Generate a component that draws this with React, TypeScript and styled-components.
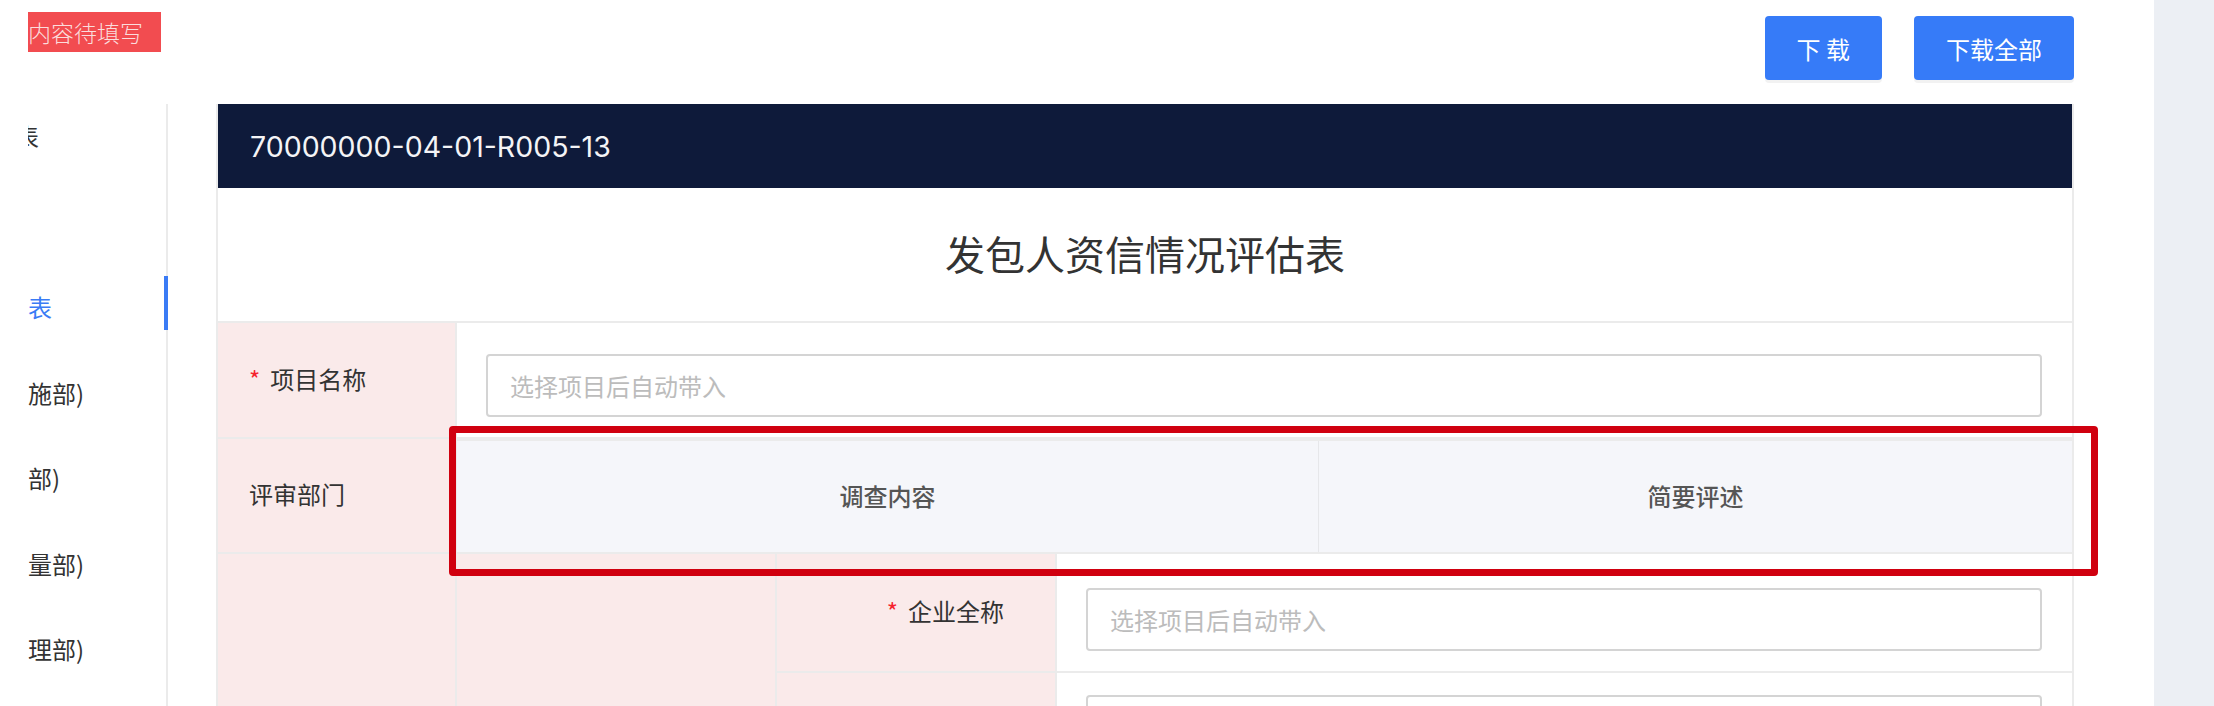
import React from 'react';
import styled, { createGlobalStyle } from 'styled-components';

const GlobalStyle = createGlobalStyle`
  html, body {
    margin: 0;
    padding: 0;
    background: #fff;
  }
  body {
    font-family: "Noto Sans CJK SC", "Noto Sans", sans-serif;
    color: #333;
  }
  * {
    box-sizing: border-box;
  }
`;

type NavItem = {
  label: string;
  active?: boolean;
  clip?: boolean;
};

const navItems: NavItem[] = [
  { label: '表', clip: true },
  { label: '' },
  { label: '表', active: true },
  { label: '施部)' },
  { label: '部)' },
  { label: '量部)' },
  { label: '理部)' },
];

const App: React.FC = () => {
  return (
    <>
      <GlobalStyle />
      <Page>
        <Main>
          <TopBar>
            <Badge>内容待填写</Badge>
            <Actions>
              <PrimaryButton>下 载</PrimaryButton>
              <PrimaryButton>下载全部</PrimaryButton>
            </Actions>
          </TopBar>

          <Body>
            <Sidebar>
              {navItems.map((item, i) => (
                <NavRow key={i} $active={item.active}>
                  <NavText $clip={item.clip}>
                    <span>{item.label}</span>
                  </NavText>
                </NavRow>
              ))}
            </Sidebar>

            <Card>
              <CardHeader>70000000-04-01-R005-13</CardHeader>
              <CardTitle>发包人资信情况评估表</CardTitle>

              <FormRow>
                <LabelCell>
                  <Star>*</Star>项目名称
                </LabelCell>
                <FieldCell $top={31}>
                  <TextInput placeholder="选择项目后自动带入" readOnly />
                </FieldCell>
              </FormRow>

              <FormRow>
                <LabelCell>评审部门</LabelCell>
                <HeadGrid>
                  <HeadCell>调查内容</HeadCell>
                  <HeadCell>简要评述</HeadCell>
                </HeadGrid>
              </FormRow>

              <Section>
                <PinkColumn />
                <PinkColumn />
                <SubRows>
                  <SubRow>
                    <SubLabel>
                      <Star>*</Star>企业全称
                    </SubLabel>
                    <FieldCell $top={34}>
                      <TextInput placeholder="选择项目后自动带入" readOnly />
                    </FieldCell>
                  </SubRow>
                  <SubRow>
                    <SubLabel />
                    <FieldCell $top={22}>
                      <TextInput readOnly />
                    </FieldCell>
                  </SubRow>
                </SubRows>
              </Section>
            </Card>
          </Body>
        </Main>
        <RightStrip />
        <Highlight />
      </Page>
    </>
  );
};

export default App;

const Page = styled.div`
  position: relative;
  display: flex;
  width: 100%;
  height: 706px;
  overflow: hidden;
`;

const Main = styled.div`
  flex: 1;
  min-width: 0;
  display: flex;
  flex-direction: column;
`;

const RightStrip = styled.div`
  width: 60px;
  flex-shrink: 0;
  background: #eceff4;
`;

const TopBar = styled.div`
  height: 104px;
  flex-shrink: 0;
  display: flex;
  justify-content: space-between;
  align-items: flex-start;
  padding: 0 80px 0 28px;
`;

const Badge = styled.div`
  margin-top: 12px;
  height: 40px;
  line-height: 40px;
  padding-right: 18px;
  background: #f24c50;
  color: #fbdcdc;
  font-size: 23px;
  font-weight: 300;
  white-space: nowrap;
`;

const Actions = styled.div`
  display: flex;
  gap: 32px;
  margin-top: 16px;
`;

const PrimaryButton = styled.button`
  height: 64px;
  padding: 0 32px;
  border: none;
  border-radius: 4px;
  background: #367bf8;
  color: #fff;
  font-family: inherit;
  font-size: 24px;
  white-space: pre;
  box-shadow: 0 3px 0 rgba(0, 0, 0, 0.05);
  cursor: pointer;
`;

const Body = styled.div`
  flex: 1;
  min-height: 0;
  display: flex;
  align-items: flex-start;
  overflow: hidden;
`;

const Sidebar = styled.div`
  width: 168px;
  height: 100%;
  flex-shrink: 0;
  border-right: 2px solid #ebebeb;
`;

const NavRow = styled.div<{ $active?: boolean }>`
  position: relative;
  height: 85.5px;
  padding: 16px 0 0 28px;
  font-size: 24px;
  line-height: 32px;
  color: ${({ $active }) => ($active ? '#3a7bf5' : '#333')};

  &::after {
    content: '';
    display: ${({ $active }) => ($active ? 'block' : 'none')};
    position: absolute;
    top: 1px;
    right: -2px;
    width: 4px;
    height: 54px;
    background: #3a7bf5;
  }
`;

const NavText = styled.div<{ $clip?: boolean }>`
  overflow: ${({ $clip }) => ($clip ? 'hidden' : 'visible')};
  white-space: nowrap;

  span {
    display: inline-block;
    margin-left: ${({ $clip }) => ($clip ? '-13px' : '0')};
  }
`;

const Card = styled.div`
  margin-left: 48px;
  width: 1858px;
  flex-shrink: 0;
  border-left: 2px solid #ebebeb;
  border-right: 2px solid #ebebeb;
`;

const CardHeader = styled.div`
  height: 84px;
  display: flex;
  align-items: center;
  padding-left: 32px;
  background: #0e1a3a;
  color: #f4f4f6;
  font-family: Inter, "Noto Sans", sans-serif;
  font-size: 28.5px;
`;

const CardTitle = styled.div`
  height: 135px;
  display: flex;
  align-items: center;
  justify-content: center;
  padding-bottom: 3px;
  border-bottom: 2px solid #ebebeb;
  font-size: 40px;
  color: #333;
`;

const FormRow = styled.div`
  display: grid;
  grid-template-columns: 239px 1fr;
  border-bottom: 2px solid #ebebeb;
`;

const LabelCell = styled.div`
  display: flex;
  align-items: center;
  padding: 0 0 4px 31px;
  background: #faeaea;
  border-right: 2px solid #ebebeb;
  font-size: 24px;
  color: #333;
`;

const Star = styled.span`
  color: #f5222d;
  margin-right: 10px;
`;

const FieldCell = styled.div<{ $top: number }>`
  padding: ${({ $top }) => $top}px 30px 20px 29px;
`;

const TextInput = styled.input`
  display: block;
  width: 100%;
  height: 63px;
  padding: 0 22px;
  border: 2px solid #d4d4d4;
  border-radius: 4px;
  background: #fff;
  font-family: inherit;
  font-size: 24px;
  color: #333;
  outline: none;

  &::placeholder {
    color: #bcbcbc;
  }
`;

const HeadGrid = styled.div`
  display: grid;
  grid-template-columns: 862px 1fr;
  border-top: 2px solid #ebebeb;
`;

const HeadCell = styled.div`
  height: 111px;
  display: flex;
  align-items: center;
  justify-content: center;
  padding-bottom: 3px;
  background: #f5f6fa;
  font-size: 24px;
  font-weight: 500;
  color: #555;

  &:first-child {
    border-right: 1px solid #e6e7ea;
  }
`;

const Section = styled.div`
  display: grid;
  grid-template-columns: 239px 320px 1fr;
`;

const PinkColumn = styled.div`
  background: #faeaea;
  border-right: 2px solid #ebebeb;
`;

const SubRows = styled.div`
  display: flex;
  flex-direction: column;
`;

const SubRow = styled.div`
  display: grid;
  grid-template-columns: 280px 1fr;
  border-bottom: 2px solid #ebebeb;
`;

const SubLabel = styled.div`
  display: flex;
  align-items: center;
  justify-content: flex-end;
  padding: 0 51px 4px 0;
  background: #faeaea;
  border-right: 2px solid #ebebeb;
  font-size: 24px;
  color: #333;
`;

const Highlight = styled.div`
  position: absolute;
  left: 449px;
  top: 426px;
  width: 1649px;
  height: 150px;
  border: 7px solid #d0000f;
  border-radius: 4px;
  pointer-events: none;
`;
